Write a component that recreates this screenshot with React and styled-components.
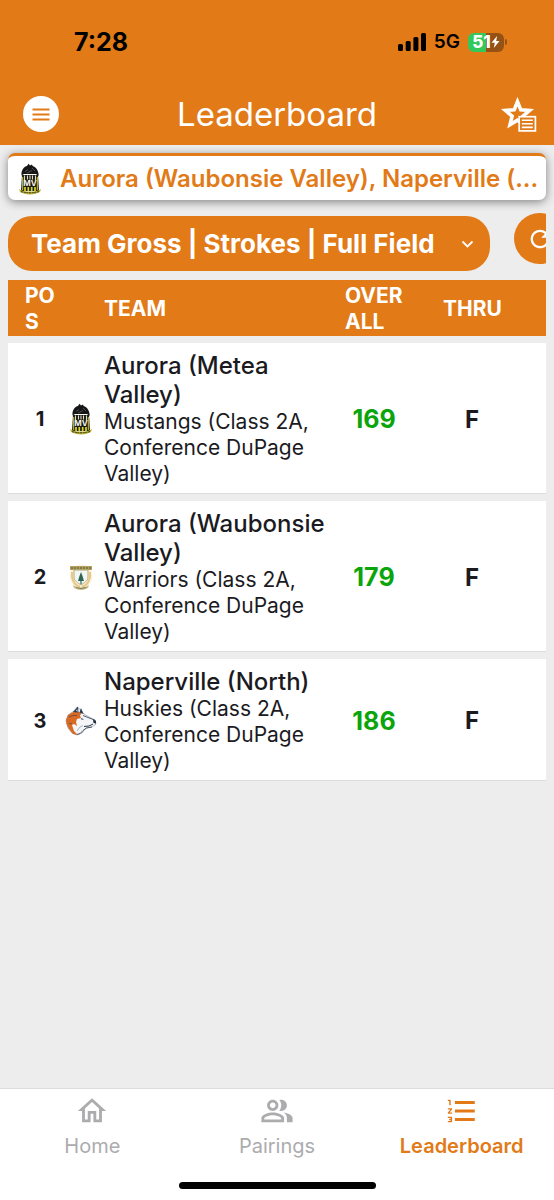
import React from "react";
import styled, { createGlobalStyle, css } from "styled-components";
import { MdFormatListNumbered, MdOutlineHome, MdRefresh } from "react-icons/md";

const orange = "#e17a17";
const ink = "#1b1b1f";

const GlobalStyle = createGlobalStyle`
  * { box-sizing: border-box; }
  body {
    margin: 0;
    background: #ededed;
    color: ${ink};
    font-family: Inter, "Liberation Sans", sans-serif;
  }
  button, select { font-family: inherit; margin: 0; border: 0; }
  svg { flex: none; }
`;

const Page = styled.div`
  display: flex;
  flex-direction: column;
  min-height: 100vh;
`;

const Header = styled.header`
  background: ${orange};
  padding-bottom: 7px;
`;

const StatusBar = styled.div`
  display: flex;
  align-items: center;
  justify-content: space-between;
  height: 84px;
  padding: 0 47px 0 74px;
  color: #000;
`;

const Clock = styled.time`
  font-size: 25px;
  line-height: 32px;
  font-weight: 700;
`;

const StatusIcons = styled.div`
  display: flex;
  align-items: center;
  gap: 8px;
`;

const Network = styled.span`
  font-size: 19px;
  line-height: 24px;
  font-weight: 600;
`;

const BatteryWrap = styled.div`
  display: flex;
  align-items: center;
  gap: 1px;
`;

const Battery = styled.div`
  display: flex;
  align-items: center;
  justify-content: center;
  width: 36px;
  height: 19px;
  border-radius: 6px;
  background: linear-gradient(to right, #34c759 51%, #955214 51%);
  color: #fff;
  font-size: 17px;
  line-height: 19px;
  font-weight: 800;
`;

const BatteryCap = styled.span`
  width: 2px;
  height: 6px;
  border-radius: 0 2px 2px 0;
  background: #955214;
`;

const TitleBar = styled.div`
  display: grid;
  grid-template-columns: 1fr auto 1fr;
  align-items: center;
  height: 54px;
  padding: 6px 17px 0;
`;

const Title = styled.h1`
  margin: 0;
  color: #fff;
  font-size: 33px;
  line-height: 40px;
  font-weight: 400;
`;

const MenuButton = styled.button`
  display: flex;
  align-items: center;
  justify-content: center;
  width: 36px;
  height: 36px;
  margin-left: 6px;
  padding: 0;
  border-radius: 50%;
  background: #fff;
`;

const FavoritesButton = styled.button`
  display: flex;
  justify-self: end;
  padding: 0;
  background: none;
`;

const Main = styled.main`
  flex: 1;
  padding: 8px 8px 24px;
`;

const Banner = styled.section`
  display: flex;
  align-items: center;
  gap: 19px;
  height: 47px;
  padding: 1px 4px 0 11px;
  border-top: 3px solid ${orange};
  border-radius: 7px;
  background: #fff;
  box-shadow: 0 2px 10px rgba(0, 0, 0, 0.45);
`;

const BannerText = styled.p`
  flex: 1;
  min-width: 0;
  margin: 0;
  color: ${orange};
  font-size: 24px;
  line-height: 32px;
  font-weight: 600;
  white-space: nowrap;
`;

const FilterBar = styled.div`
  display: flex;
  align-items: flex-start;
  margin-top: 13px;
  gap: 24px;
  overflow: hidden;
`;

const SelectWrap = styled.div`
  position: relative;
  flex: 1;
  margin-top: 3px;
`;

const Select = styled.select`
  display: block;
  width: 100%;
  height: 55px;
  padding: 0 44px 0 23px;
  border-radius: 24px;
  appearance: none;
  background: ${orange};
  color: #fff;
  font-size: 26px;
  font-weight: 700;
`;

const Chevron = styled.svg`
  position: absolute;
  top: 24px;
  right: 16px;
  pointer-events: none;
`;

const RefreshButton = styled.button`
  display: flex;
  flex: none;
  align-items: center;
  justify-content: center;
  width: 51px;
  height: 51px;
  margin-right: -19px;
  padding: 0;
  border-radius: 50%;
  background: ${orange};
  color: #fff;
`;

const Table = styled.table`
  width: 100%;
  margin-top: 2px;
  border-collapse: separate;
  border-spacing: 0 7px;
  table-layout: fixed;
`;

const columnWidths = {
  pos: css`width: 56px;`,
  overall: css`width: 98px;`,
  thru: css`width: 123px;`,
};

const HeadCell = styled.th`
  ${({ $column }) => columnWidths[$column]}
  padding: 3px 0 1px ${({ $indent }) => $indent}px;
  background: ${orange};
  color: #fff;
  font-size: 21px;
  line-height: 26px;
  font-weight: 700;
  text-align: left;
`;

const Wrapped = styled.span`
  display: block;
  width: ${({ $width }) => $width}px;
  word-break: break-all;
`;

const Cell = styled.td`
  padding: 8px 0 6px;
  border-bottom: 1px solid #dcdcde;
  background: #fff;
  text-align: center;
  font-weight: 700;
`;

const PosCell = styled(Cell)`
  padding-left: 8px;
  font-size: 20px;
`;

const ScoreCell = styled(Cell)`
  color: #0aa50a;
  font-size: 25px;
`;

const ThruCell = styled(Cell)`
  padding-right: 25px;
  font-size: 24px;
`;

const TeamCell = styled(Cell)`
  text-align: left;
  font-weight: 400;
`;

const Team = styled.div`
  display: flex;
  align-items: center;
`;

const LogoSlot = styled.div`
  display: flex;
  flex: none;
  justify-content: center;
  width: 40px;
  padding-right: 6px;
`;

const TeamName = styled.div`
  font-size: 24px;
  line-height: 29px;
  font-weight: 500;
`;

const TeamDetail = styled.div`
  font-size: 21px;
  line-height: 26px;
`;

const Footer = styled.footer`
  height: 112px;
  border-top: 1px solid #dcdcdc;
  background: #fff;
`;

const Tabs = styled.nav`
  display: grid;
  grid-template-columns: repeat(3, 1fr);
  height: 93px;
  padding-top: 5px;
`;

const Tab = styled.a`
  display: flex;
  flex-direction: column;
  align-items: center;
  gap: 5px;
  color: ${({ $active }) => ($active ? orange : "#acacae")};
  font-size: 20px;
  line-height: 26px;
  font-weight: ${({ $active }) => ($active ? 600 : 400)};
  text-decoration: none;
`;

const HomeIndicator = styled.div`
  width: 197px;
  height: 7px;
  margin: 0 auto;
  border-radius: 4px;
  background: #000;
`;

const SignalIcon = () => (
  <svg width="28" height="18" viewBox="0 0 28 18" aria-hidden="true">
    <rect x="0" y="11" width="5" height="7" rx="1.5" />
    <rect x="7.7" y="8" width="5" height="10" rx="1.5" />
    <rect x="15.4" y="4" width="5" height="14" rx="1.5" />
    <rect x="23" y="0" width="5" height="18" rx="1.5" />
  </svg>
);

const BoltIcon = () => (
  <svg width="9" height="12" viewBox="0 0 8 12" aria-hidden="true">
    <path d="M5.6 0 0 6.8h3.3L2.3 12 8 5.1H4.7z" fill="#fff" />
  </svg>
);

const MenuIcon = () => (
  <svg width="18" height="13" viewBox="0 0 18 13" aria-hidden="true">
    <path d="M.5 1.5h17M.5 6.5h17M.5 11.5h17" stroke={orange} strokeWidth="2" />
  </svg>
);

const FavoritesIcon = () => (
  <svg width="36" height="36" viewBox="0 0 36 36" aria-hidden="true">
    <path
      d="M16.5 5.6 19.8 13.8 28.6 14.5 21.9 20.2 24 28.7 16.5 24.1 9 28.7 11.1 20.2 4.4 14.5 13.2 13.8z"
      fill="none"
      stroke="#fff"
      strokeWidth="3.6"
      strokeMiterlimit="8"
    />
    <rect x="18.2" y="20.7" width="16.2" height="14.2" fill={orange} stroke="#fff" strokeWidth="1.7" />
    <path d="M20.8 24.2h11M20.8 27.8h11M20.8 31.4h11" stroke="#fff" strokeWidth="1.6" />
  </svg>
);

const PairingsIcon = () => (
  <svg width="34" height="34" viewBox="0 0 24 24" fill="currentColor" aria-hidden="true">
    <path d="M16.67 13.13C18.04 14.06 19 15.32 19 17v3h4v-3c0-2.18-3.57-3.47-6.33-3.87z" />
    <path d="M15 12c2.21 0 4-1.79 4-4s-1.79-4-4-4c-.47 0-.91.1-1.33.24C14.5 5.27 15 6.58 15 8s-.5 2.73-1.33 3.76c.42.14.86.24 1.33.24z" />
    <path d="M9 12c2.21 0 4-1.79 4-4s-1.79-4-4-4-4 1.79-4 4 1.79 4 4 4zm0-6c1.1 0 2 .9 2 2s-.9 2-2 2-2-.9-2-2 .9-2 2-2z" />
    <path d="M9 13c-2.67 0-8 1.34-8 4v3h16v-3c0-2.66-5.33-4-8-4zm6 5H3v-.99C3.2 16.29 6.3 15 9 15s5.8 1.29 6 2v1z" />
  </svg>
);

const MustangsLogo = () => (
  <svg width="22" height="32" viewBox="0 0 22 32" aria-hidden="true">
    <path d="M2.5 12.5C2 7 5 3.5 8 3L9.5.8 11 2.4 13 1.5 13.6 3C17 4 20 8 19.6 13L17 11H5z" fill="#161616" />
    <path d="M6 8.5 9 6.6M8 10 13 7.5M13 5l3 3" stroke="#66666a" strokeWidth=".7" />
    <path d="M3 12 19 12 20 28 2 28z" fill="#1d1c12" />
    <path d="M5.5 12.5V17M8.5 12.5V16.5M11 12.5V16.5M13.5 12.5V16.5M16.5 12.5V17" stroke="#dddccb" strokeWidth="1.1" />
    <path d="M3.7 14v13M18.3 14v13" stroke="#d2cc3c" strokeWidth="1" />
    <text x="11" y="23.4" textAnchor="middle" fontSize="8" fontWeight="700" fontFamily="Inter, sans-serif" fill="#f4f3e8">MV</text>
    <path d="M6 24v4M9.3 24v4M12.7 24v4M16 24v4" stroke="#d9d52f" strokeWidth="1.7" />
    <path d="M0 26Q4 28.6 11 28.6T22 26L21 29Q16 31.5 11 31.5T1 29z" fill="#b8b335" />
    <path d="M2 28.6Q11 31 20 28.6" fill="none" stroke="#3c3a18" strokeWidth="1" strokeDasharray="2 .7" />
  </svg>
);

const WarriorsLogo = () => (
  <svg width="24" height="28" viewBox="0 0 24 28" aria-hidden="true">
    <circle cx="12" cy="13" r="11.5" fill="#fbf3df" />
    <path d="M3 9C2 16 5 22 11 24M21 9c1 7-2 13-8 15" fill="none" stroke="#e6c884" strokeWidth="2" />
    <path d="M1 3h22v4H1z" fill="#b5a15c" />
    <path d="M2 5h20" stroke="#6d704a" strokeWidth="1.3" strokeDasharray="2 1" />
    <path d="M5 7h14v7c0 4-4 6-7 8-3-2-7-4-7-8z" fill="#f2f7f3" stroke="#b2a875" />
    <path d="m12 9 1.5 4 1.5 5H9l1.5-5z" fill="#2f6557" />
    <path d="M12 16v5" stroke="#2f6557" strokeWidth="1.2" />
    <path d="M4 22q8 5 16 0l-1 3q-7 4-14 0z" fill="#c8ba85" />
    <path d="M7 24.5q5 2 10 0" fill="none" stroke="#777451" strokeWidth=".8" />
  </svg>
);

const HuskiesLogo = () => (
  <svg width="32" height="30" viewBox="0 0 32 30" aria-hidden="true">
    <path
      d="M3 9 9 5 12 1 16 4 19 8 24 11 30 14 31 18 27 21 21 22 17 27 12 29 7 27 3 22 1 15z"
      fill="#f4f5f7"
      stroke="#8f9bab"
      strokeWidth=".7"
    />
    <path d="M1 14 3 9 9 5.5 17 6.5 15 9.5 16 12 12 13 11 16 12 20 9 18 7 19 9 25 13 29 8 28 4 23 1.5 18z" fill="#d86a25" />
    <path d="M8 6 13 .5 13.5 6.5zM14.5 6.5 16 2l2.5 6z" fill="#293c57" />
    <path d="M11 4.5 12.4 3l.2 3z" fill="#d5dde6" />
    <path d="M4 11 8 9.5h4M4 17l3 1" fill="none" stroke="#5c4a48" strokeWidth=".8" />
    <path d="M18 9.5 23 11.5 30 14.2M12 28.5Q16 28 18 24.5L21.5 22 27 21" fill="none" stroke="#3f4d61" strokeWidth=".9" />
    <path d="m16 12 3 1.2-2.4.6z" fill="#293c57" />
    <path d="m28 13.6 3 1.2v3l-2.6-1z" fill="#29313f" />
    <path d="m19 20.5 5-.5 4-2" fill="none" stroke="#29313f" strokeWidth="1" />
    <path d="m12 25 3-4 3-1.5" fill="none" stroke="#a9b4c2" strokeWidth="1" />
  </svg>
);

const teams = [
  { pos: 1, name: "Aurora (Metea Valley)", detail: "Mustangs (Class 2A, Conference DuPage Valley)", overall: 169, thru: "F", Logo: MustangsLogo },
  { pos: 2, name: "Aurora (Waubonsie Valley)", detail: "Warriors (Class 2A, Conference DuPage Valley)", overall: 179, thru: "F", Logo: WarriorsLogo },
  { pos: 3, name: "Naperville (North)", detail: "Huskies (Class 2A, Conference DuPage Valley)", overall: 186, thru: "F", Logo: HuskiesLogo },
];

export default function App() {
  return (
    <Page>
      <GlobalStyle />
      <Header>
        <StatusBar>
          <Clock>7:28</Clock>
          <StatusIcons>
            <SignalIcon />
            <Network>5G</Network>
            <BatteryWrap>
              <Battery>
                51
                <BoltIcon />
              </Battery>
              <BatteryCap />
            </BatteryWrap>
          </StatusIcons>
        </StatusBar>
        <TitleBar>
          <MenuButton type="button" aria-label="Menu">
            <MenuIcon />
          </MenuButton>
          <Title>Leaderboard</Title>
          <FavoritesButton type="button" aria-label="Favorites">
            <FavoritesIcon />
          </FavoritesButton>
        </TitleBar>
      </Header>

      <Main>
        <Banner>
          <MustangsLogo />
          <BannerText>Aurora (Waubonsie Valley), Naperville (...</BannerText>
        </Banner>

        <FilterBar>
          <SelectWrap>
            <Select aria-label="Leaderboard view" defaultValue="gross">
              <option value="gross">Team Gross | Strokes | Full Field</option>
            </Select>
            <Chevron width="13" height="8" viewBox="0 0 13 8" aria-hidden="true">
              <path d="m1.5 1.5 5 5 5-5" fill="none" stroke="#fff" strokeWidth="1.8" />
            </Chevron>
          </SelectWrap>
          <RefreshButton type="button" aria-label="Refresh">
            <MdRefresh size={28} />
          </RefreshButton>
        </FilterBar>

        <Table>
          <thead>
            <tr>
              <HeadCell scope="col" $column="pos" $indent={17}>
                <Wrapped $width={36}>POS</Wrapped>
              </HeadCell>
              <HeadCell scope="col" $indent={40}>TEAM</HeadCell>
              <HeadCell scope="col" $column="overall" $indent={20}>
                <Wrapped $width={66}>OVERALL</Wrapped>
              </HeadCell>
              <HeadCell scope="col" $column="thru" $indent={20}>THRU</HeadCell>
            </tr>
          </thead>
          <tbody>
            {teams.map(({ pos, name, detail, overall, thru, Logo }) => (
              <tr key={pos}>
                <PosCell>{pos}</PosCell>
                <TeamCell>
                  <Team>
                    <LogoSlot>
                      <Logo />
                    </LogoSlot>
                    <div>
                      <TeamName>{name}</TeamName>
                      <TeamDetail>{detail}</TeamDetail>
                    </div>
                  </Team>
                </TeamCell>
                <ScoreCell>{overall}</ScoreCell>
                <ThruCell>{thru}</ThruCell>
              </tr>
            ))}
          </tbody>
        </Table>
      </Main>

      <Footer>
        <Tabs>
          <Tab href="#home">
            <MdOutlineHome size={34} />
            Home
          </Tab>
          <Tab href="#pairings">
            <PairingsIcon />
            Pairings
          </Tab>
          <Tab href="#leaderboard" $active aria-current="page">
            <MdFormatListNumbered size={34} />
            Leaderboard
          </Tab>
        </Tabs>
        <HomeIndicator />
      </Footer>
    </Page>
  );
}
